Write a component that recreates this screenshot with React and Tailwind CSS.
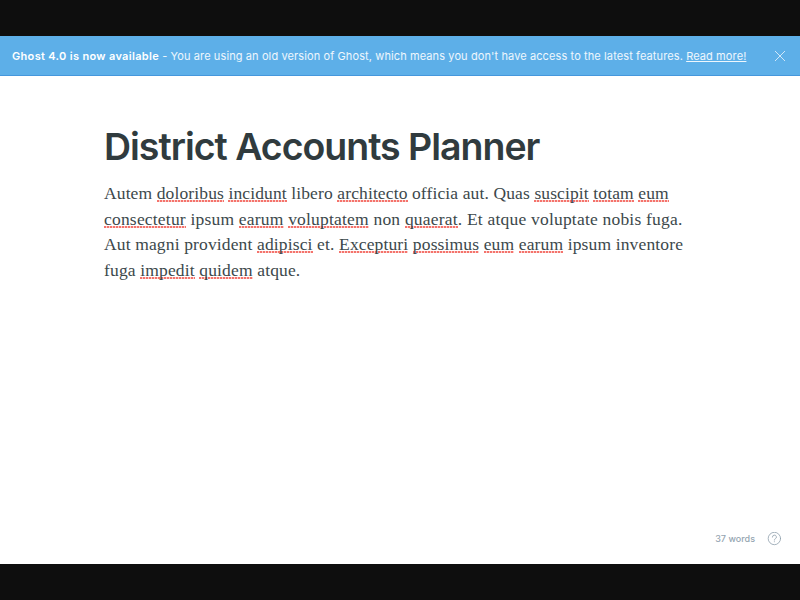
import React from "react";

// Each line: letter spacing class and its words; a leading "~" marks a misspelt word.
const lines = [
  { track: "tracking-[0.12px]", text: "Autem ~doloribus ~incidunt libero ~architecto officia aut. Quas ~suscipit ~totam ~eum" },
  { track: "tracking-[0.2px]", text: "~consectetur ipsum ~earum ~voluptatem non ~quaerat. Et atque voluptate nobis fuga." },
  { track: "tracking-[0.14px]", text: "Aut magni provident ~adipisci et. ~Excepturi ~possimus ~eum ~earum ipsum inventore" },
  { track: "tracking-[0.15px]", text: "fuga ~impedit ~quidem atque." },
];

function Word({ value }) {
  if (!value.startsWith("~")) return value;
  const word = value.slice(1).replace(".", "");
  return (
    <>
      <span className="bg-[linear-gradient(90deg,#f4736c_2px,#fbd0cd_2px)] bg-[length:3px_2px] bg-repeat-x bg-[position:0_calc(100%-1px)]">
        {word}
      </span>
      {value.endsWith(".") ? "." : ""}
    </>
  );
}

export default function App() {
  return (
    <div className="flex h-[600px] w-[800px] flex-col overflow-hidden bg-[#0e0e0e] py-9 font-['Inter',sans-serif]">
      <div className="flex h-10 shrink-0 items-center justify-between border-b border-[#4597dc] bg-[#5dafe8] pr-[15px] pl-3 text-white">
        <p className="pt-px text-[11px] tracking-[0.107px] whitespace-nowrap text-white/90">
          <b className="font-semibold tracking-[0.32px] text-white">Ghost 4.0 is now available</b> - You are using an old
          version of Ghost, which means you don't have access to the latest features. <a className="underline">Read more!</a>
        </p>
        <svg className="size-[10px]" viewBox="0 0 10 10" fill="none" stroke="white" strokeOpacity=".9" strokeWidth=".8">
          <path d="M0 0l10 10M10 0L0 10" />
        </svg>
      </div>
      <main className="flex grow flex-col bg-white">
        <h1 className="mt-[47px] ml-[104px] text-[37.5px] leading-[48px] font-semibold tracking-[-1.02px] whitespace-nowrap text-[#303b3e]">
          District Accounts Planner
        </h1>
        <div className="mt-[10px] ml-[104px] font-['Liberation_Serif',serif] text-[17.5px] leading-[25.6px] text-[#3c484b]">
          {lines.map((line) => (
            <div key={line.text} className={"whitespace-nowrap " + line.track}>
              <span>
                {line.text.split(" ").map((w, i) => (
                  <React.Fragment key={i}>
                    {i > 0 && " "}
                    <Word value={w} />
                  </React.Fragment>
                ))}
              </span>
            </div>
          ))}
        </div>
        <div className="mt-auto flex h-[51px] items-center justify-end gap-3 pr-[19px] text-[9px] font-medium tracking-[0.02px] text-[#94a5b1]">
          <span>37 words</span>
          <svg className="size-[14px]" viewBox="0 0 14 14" fill="none" stroke="#8fa0ac" strokeWidth=".8" strokeLinecap="round">
            <circle cx="7.4" cy="6.5" r="6.2" />
            <path d="M5.4 5.1a2 2 0 1 1 2.8 1.8c-.6.3-.8.5-.8 1.2" />
            <path d="M7.4 9.7v.1" />
          </svg>
        </div>
      </main>
    </div>
  );
}
